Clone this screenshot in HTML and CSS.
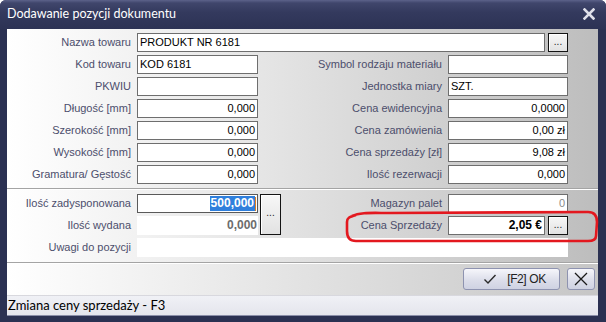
FILE: index.html
```
<!DOCTYPE html>
<html lang="pl">
<head>
<meta charset="utf-8">
<title>Dodawanie pozycji dokumentu</title>
<link rel="stylesheet" href="styles.css">
</head>
<body>
<div class="win">
  <div class="titlebar">
    <span class="title">Dodawanie pozycji dokumentu</span>
    <svg class="tclose" width="12" height="12" viewBox="0 0 12 12"><path d="M1.5 1.5 L10.5 10.5 M10.5 1.5 L1.5 10.5" stroke="#dfe0ea" stroke-width="2.6" stroke-linecap="square"/></svg>
  </div>
  <div class="client">
    <div class="form">
      <label class="lbl c1">Nazwa towaru</label>
      <div class="inp span-name">PRODUKT NR 6181</div>
      <div class="dots c5">...</div>

      <label class="lbl c1">Kod towaru</label>
      <div class="inp c2">KOD 6181</div>
      <label class="lbl c3">Symbol rodzaju materiału</label>
      <div class="inp span-right"></div>

      <label class="lbl c1">PKWIU</label>
      <div class="inp c2"></div>
      <label class="lbl c3">Jednostka miary</label>
      <div class="inp span-right">SZT.</div>

      <label class="lbl c1">Długość [mm]</label>
      <div class="inp c2 num">0,000</div>
      <label class="lbl c3">Cena ewidencyjna</label>
      <div class="inp span-right num">0,0000</div>

      <label class="lbl c1">Szerokość [mm]</label>
      <div class="inp c2 num">0,000</div>
      <label class="lbl c3">Cena zamówienia</label>
      <div class="inp span-right num">0,00 zł</div>

      <label class="lbl c1">Wysokość [mm]</label>
      <div class="inp c2 num">0,000</div>
      <label class="lbl c3">Cena sprzedaży [zł]</label>
      <div class="inp span-right num">9,08 zł</div>

      <label class="lbl c1">Gramatura/ Gęstość</label>
      <div class="inp c2 num">0,000</div>
      <label class="lbl c3">Ilość rezerwacji</label>
      <div class="inp span-right num">0,000</div>
    </div>
    <div class="sep"></div>
    <div class="form lower">
      <label class="lbl c1 r1">Ilość zadysponowana</label>
      <div class="inp c2 r1 num active"><span class="sel">500,000</span><span class="caret"></span></div>
      <div class="dots tall">...</div>
      <label class="lbl c3 r1">Magazyn palet</label>
      <div class="inp span-right r1 num muted">0</div>

      <label class="lbl c1 r2">Ilość wydana</label>
      <div class="plain c2 r2 num">0,000</div>
      <label class="lbl c3 r2">Cena Sprzedaży</label>
      <div class="inp c4 r2 num strong">2,05 €</div>
      <div class="dots c5 r2">...</div>

      <label class="lbl c1 r3">Uwagi do pozycji</label>
      <div class="plain span-notes r3"></div>
    </div>
    <div class="sep"></div>
    <div class="actions">
      <button class="btn ok"><svg width="14" height="12" viewBox="0 0 14 12"><path d="M1.5 6.5 L5 10 L12.5 2" fill="none" stroke="#2a2a2a" stroke-width="1.4"/></svg><span>[F2] OK</span></button>
      <button class="btn x"><svg width="16" height="16" viewBox="0 0 16 16"><path d="M2 2 L14 14 M14 2 L2 14" stroke="#1a1a1a" stroke-width="1.3"/></svg></button>
    </div>
    <div class="status">Zmiana ceny sprzedaży - F3</div>
  </div>
  <svg class="mark" width="606" height="322" viewBox="0 0 606 322">
    <path d="M352 216 C360 212 372 213 390 213 L588 212 C595 212 597 216 597 222 L596 236 C596 240 593 241 588 241 L356 241 C349 241 347 237 347 231 L347 222 C347 218 349 217 356 215" fill="none" stroke="#e3181f" stroke-width="2.6" stroke-linejoin="round"/>
  </svg>
</div>
</body>
</html>
```
FILE: styles.css
```
* { box-sizing: border-box; }
html, body { margin: 0; padding: 0; background: #ffffff; }
body { width: 606px; height: 322px; overflow: hidden; font-family: "Liberation Sans", Arial, sans-serif; }

.win {
  position: relative;
  width: 606px;
  height: 322px;
  background: #2b3152;
  border-radius: 6px 6px 0 0;
  padding: 0 8px 6px 7px;
  display: flex;
  flex-direction: column;
}

.titlebar {
  height: 29px;
  margin: 0 -8px 0 -7px;
  padding: 0 11px 2px 7px;
  border-radius: 6px 6px 0 0;
  background: linear-gradient(#5c628a 0, #40466c 3px, #343a5e 12px, #2c3254 100%);
  display: flex;
  align-items: center;
  justify-content: space-between;
}
.title { color: #ffffff; font-family: "Lato", "Liberation Sans", sans-serif; font-size: 12.5px; }

.client {
  flex: 1;
  display: flex;
  flex-direction: column;
  background: #e0e0e0;
}

.form {
  display: grid;
  grid-template-columns: 130px 121px 190px 97px 23px 1fr;
  grid-auto-rows: 19px;
  row-gap: 3px;
  padding: 4px 0 4px 0;
  background: linear-gradient(to right, #ffffff 0%, #e4e4e4 45%, #bdbdbd 100%);
}
.form.lower { padding: 4px 0 5px 0; }

.lbl {
  font-size: 11px;
  color: #4c4e6c;
  text-align: right;
  line-height: 19px;
  white-space: nowrap;
  padding-right: 6px;
}
.c1 { grid-column: 1; }
.c2 { grid-column: 2; }
.c3 { grid-column: 3; }
.c4 { grid-column: 4; }
.c5 { grid-column: 5; }
.r1 { grid-row: 1; }
.r2 { grid-row: 2; }
.r3 { grid-row: 3; }
.span-name { grid-column: 2 / 5; }
.span-right { grid-column: 4 / 6; }
.span-notes { grid-column: 2 / 6; }

.inp {
  background: #ffffff;
  border: 1px solid #6e6e6e;
  font-size: 11px;
  line-height: 17px;
  padding: 0 2px 0 2px;
  color: #000;
  white-space: nowrap;
  overflow: hidden;
}
.plain {
  background: #ffffff;
  font-size: 11px;
  line-height: 19px;
  padding: 0 1px;
}
.num { text-align: right; }
.muted { color: #8a8a8a; }
.plain.num { font-weight: bold; color: #6c6c6c; font-size: 12px; }
.strong { font-weight: bold; font-size: 12px; }

.active { border-color: #5a5a5a; font-size: 12px; font-weight: bold; display: flex; justify-content: flex-end; align-items: center; padding-right: 1px; }
.sel { background: #2f7fdc; color: #ffffff; line-height: 15px; padding: 0 1px; }
.caret { width: 1px; height: 14px; background: #e08020; }

.dots {
  margin-left: 3px;
  border: 1px solid #141414;
  background: linear-gradient(#f7f7f7, #e2e2e2);
  box-shadow: inset 1px 1px 0 #ffffff;
  font-size: 10px;
  color: #222;
  text-align: center;
  line-height: 16px;
}
.tall {
  grid-column: 3;
  grid-row: 1 / 3;
  width: 21px;
  margin-left: 2px;
  justify-self: start;
  line-height: 36px;
}

.sep {
  height: 2px;
  border-top: 1px solid #a4a4a4;
  background: #ffffff;
}

.actions {
  height: 31px;
  display: flex;
  justify-content: flex-end;
  align-items: flex-start;
  gap: 7px;
  padding: 4px 3px 0 0;
  background: linear-gradient(to right, #ffffff 0%, #e8e8e8 40%, #c6c6c6 100%);
}
.btn {
  height: 22px;
  border: 1px solid #8e93b0;
  border-radius: 3px;
  background: linear-gradient(#f6f6fb, #dcdeea 55%, #cfd2e2);
  display: flex;
  align-items: center;
  justify-content: center;
  padding: 0;
  font-family: "Liberation Sans", Arial, sans-serif;
  font-size: 12px;
  color: #222;
}
.ok { width: 97px; gap: 10px; padding-left: 6px; }
.ok span { letter-spacing: -0.4px; }
.x { width: 28px; }

.status {
  height: 21px;
  background: linear-gradient(#f0f1f6, #e4e5ec);
  border-top: 1px solid #d8d8de;
  border-bottom: 1px solid #8a8ea8;
  font-family: "Lato", "Liberation Sans", sans-serif;
  font-size: 13px;
  line-height: 19px;
  color: #000;
  padding-left: 1px;
}

.mark {
  position: absolute;
  left: 0;
  top: 0;
  pointer-events: none;
}
```
